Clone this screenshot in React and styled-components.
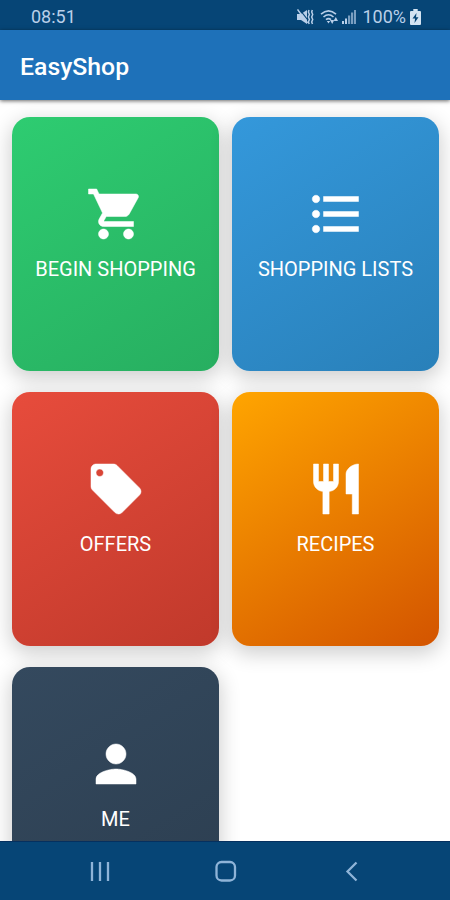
import React from "react";
import styled, { createGlobalStyle } from "styled-components";

const GlobalStyle = createGlobalStyle`
  body {
    margin: 0;
    background: #fff;
    font-family: Roboto, "Liberation Sans", sans-serif;
  }
`;

const Screen = styled.div`
  width: 450px;
  height: 900px;
  display: flex;
  flex-direction: column;
  overflow: hidden;
`;

const StatusBar = styled.div`
  flex: none;
  box-sizing: border-box;
  height: 30px;
  padding: 3px 29px 0 31px;
  display: flex;
  align-items: center;
  background: #064576;
  color: #b9cfe9;
`;

const Clock = styled.span`
  flex: 1;
  font-size: 18px;
`;

const Battery = styled.span`
  margin: 0 4px 0 6px;
  font-size: 18px;
`;

const StatusIcon = styled.svg`
  flex: none;
  margin-left: ${({ $gap }) => $gap || 0}px;
`;

const Header = styled.header`
  flex: none;
  box-sizing: border-box;
  height: 70px;
  padding: 3px 20px 0;
  display: flex;
  align-items: center;
  background: #1e71b9;
  box-shadow: 0 1px 4px rgba(0, 0, 0, 0.6);
  z-index: 1;
`;

const Title = styled.h1`
  margin: 0;
  color: #fff;
  font-size: 24.8px;
  font-weight: 500;
`;

const Content = styled.main`
  flex: 1;
  min-height: 0;
  padding: 17px 11px 0 12px;
  overflow: hidden;
`;

const Grid = styled.div`
  display: grid;
  grid-template-columns: 207px 207px;
  grid-auto-rows: 254px;
  gap: 21px 13px;
`;

const Card = styled.div`
  box-sizing: border-box;
  padding-top: 67px;
  display: flex;
  flex-direction: column;
  align-items: center;
  border-radius: 18px;
  background: linear-gradient(148deg, ${({ $from }) => $from}, ${({ $to }) => $to});
  box-shadow: 0 6px 20px 2px rgba(0, 0, 0, 0.19);
`;

const CardIcon = styled.svg`
  width: 60px;
  height: 60px;
  fill: #fff;
  stroke: #fff;
  stroke-width: 0.2;
`;

const CardLabel = styled.span`
  margin-top: 13px;
  color: #fff;
  font-size: 20px;
  line-height: 24px;
  white-space: nowrap;
`;

const NavBar = styled.nav`
  flex: none;
  box-sizing: border-box;
  height: 59px;
  padding: 1px 88px 0 87px;
  display: flex;
  align-items: center;
  justify-content: space-between;
  background: #064576;
  border-top: 1px solid #05305f;
  z-index: 1;
`;

const NavIcon = styled.svg`
  width: 26px;
  height: 26px;
  fill: none;
  stroke: #8fb4d8;
  stroke-width: 2.3;
`;

const cards = [
  {
    label: "BEGIN SHOPPING",
    from: "#2ecc71",
    to: "#27ae60",
    icon: "M7 18c-1.1 0-1.99.9-1.99 2S5.9 22 7 22s2-.9 2-2-.9-2-2-2zM1 2v2h2l3.6 7.59-1.35 2.45c-.16.28-.25.61-.25.96 0 1.1.9 2 2 2h12v-2H7.42c-.14 0-.25-.11-.25-.25l.03-.12.9-1.63h7.45c.75 0 1.41-.41 1.75-1.03l3.58-6.49c.08-.14.12-.31.12-.48 0-.55-.45-1-1-1H5.21l-.94-2H1zm16 16c-1.1 0-1.99.9-1.99 2s.89 2 1.99 2 2-.9 2-2-.9-2-2-2z",
  },
  {
    label: "SHOPPING LISTS",
    from: "#3498db",
    to: "#2980b9",
    icon: "M4 10.5c-.83 0-1.5.67-1.5 1.5s.67 1.5 1.5 1.5 1.5-.67 1.5-1.5-.67-1.5-1.5-1.5zm0-6c-.83 0-1.5.67-1.5 1.5S3.17 7.5 4 7.5 5.5 6.83 5.5 6 4.83 4.5 4 4.5zm0 12c-.83 0-1.5.68-1.5 1.5s.68 1.5 1.5 1.5 1.5-.68 1.5-1.5-.67-1.5-1.5-1.5zM7 19h14v-2H7v2zm0-6h14v-2H7v2zm0-8v2h14V5H7z",
  },
  {
    label: "OFFERS",
    from: "#e74c3c",
    to: "#c0392b",
    icon: "M21.41 11.58l-9-9C12.05 2.22 11.55 2 11 2H4c-1.1 0-2 .9-2 2v7c0 .55.22 1.05.59 1.42l9 9c.36.36.86.58 1.41.58.55 0 1.05-.22 1.41-.59l7-7c.37-.36.59-.86.59-1.41 0-.55-.23-1.06-.59-1.42zM5.5 7C4.67 7 4 6.33 4 5.5S4.67 4 5.5 4 7 4.67 7 5.5 6.33 7 5.5 7z",
  },
  {
    label: "RECIPES",
    from: "#ffa500",
    to: "#d35400",
    icon: "M11 9H9V2H7v7H5V2H3v7c0 2.12 1.66 3.84 3.75 3.97V22h2.5v-9.03C11.34 12.84 13 11.12 13 9V2h-2v7zm5-3v8h2.5v8H21V2c-2.76 0-5 2.24-5 4z",
  },
  {
    label: "ME",
    from: "#34495e",
    to: "#2c3e50",
    icon: "M12 12c2.21 0 4-1.79 4-4s-1.79-4-4-4-4 1.79-4 4 1.79 4 4 4zm0 2c-2.67 0-8 1.34-8 4v2h16v-2c0-2.66-5.33-4-8-4z",
  },
];

const MuteIcon = () => (
  <StatusIcon width="17" height="16" viewBox="0 0 17 16" fill="currentColor">
    <path d="M0 5h4L10 1v14l-6-4H0z" />
    <path d="M2.2 0l9 11.500" stroke="#064576" strokeWidth="1.2" />
    <path d="M0.5 0.500L10.5 14" stroke="currentColor" strokeWidth="1.5" />
    <path
      d="M12 1l-.6 2 1 2.500-1 2.500 1 2.500-1 2.500.8 2M15.300 1l-.6 2 1 2.500-1 2.500 1 2.500-1 2.500.8 2"
      fill="none"
      stroke="currentColor"
      strokeWidth="1.5"
    />
  </StatusIcon>
);

const WifiIcon = () => (
  <StatusIcon $gap={6} width="19" height="16" viewBox="0 0 19 16" fill="none" stroke="currentColor">
    <path d="M1 5.200Q8.500-1.500 16 5.200M3.500 8Q8.500 3.500 13.500 8M6 10.600Q8.500 8.500 11 10.600" strokeWidth="1.6" />
    <path d="M6.800 12h3.400l-1.700 2.400zM10 11l2.200 4 2.100-4zM13.500 12l2.300-4 2.200 4z" fill="currentColor" stroke="none" />
  </StatusIcon>
);

const SignalIcon = () => (
  <StatusIcon $gap={3} width="14" height="15" viewBox="0 0 14 15" fill="currentColor">
    <path d="M0 12h2v3H0zM3 9.500h2V15H3z" />
    <path d="M6 6.500h2.200V15H6zM9 3.500h2.200V15H9zM12 1h2v14h-2z" opacity="0.65" />
  </StatusIcon>
);

const BatteryIcon = () => (
  <StatusIcon width="11" height="16" viewBox="0 0 11 16">
    <path d="M3.3 0h4.4v2H10q1 0 1 1v12q0 1-1 1H1q-1 0-1-1V3q0-1 1-1h2.3z" fill="#d3e3f2" />
    <path d="M6.500 4L2.500 9.500h2.600L4.500 14l4-5.800H6z" fill="#064576" />
  </StatusIcon>
);

const App = () => {
  return (
    <>
      <GlobalStyle />
      <Screen>
        <StatusBar>
          <Clock>08:51</Clock>
          <MuteIcon />
          <WifiIcon />
          <SignalIcon />
          <Battery>100%</Battery>
          <BatteryIcon />
        </StatusBar>
        <Header>
          <Title>EasyShop</Title>
        </Header>
        <Content>
          <Grid>
            {cards.map(({ label, from, to, icon }) => (
              <Card key={label} $from={from} $to={to}>
                <CardIcon viewBox="0 0 24 24">
                  <path d={icon} />
                </CardIcon>
                <CardLabel>{label}</CardLabel>
              </Card>
            ))}
          </Grid>
        </Content>
        <NavBar>
          <NavIcon viewBox="0 0 26 26">
            <path d="M5 3v19M13 3v19M21 3v19" />
          </NavIcon>
          <NavIcon viewBox="0 0 26 26">
            <rect x="4.5" y="3" width="18.5" height="18.5" rx="5" />
          </NavIcon>
          <NavIcon viewBox="0 0 26 26">
            <path d="M20.500 3.500l-9 9 9 9" />
          </NavIcon>
        </NavBar>
      </Screen>
    </>
  );
};

export default App;
